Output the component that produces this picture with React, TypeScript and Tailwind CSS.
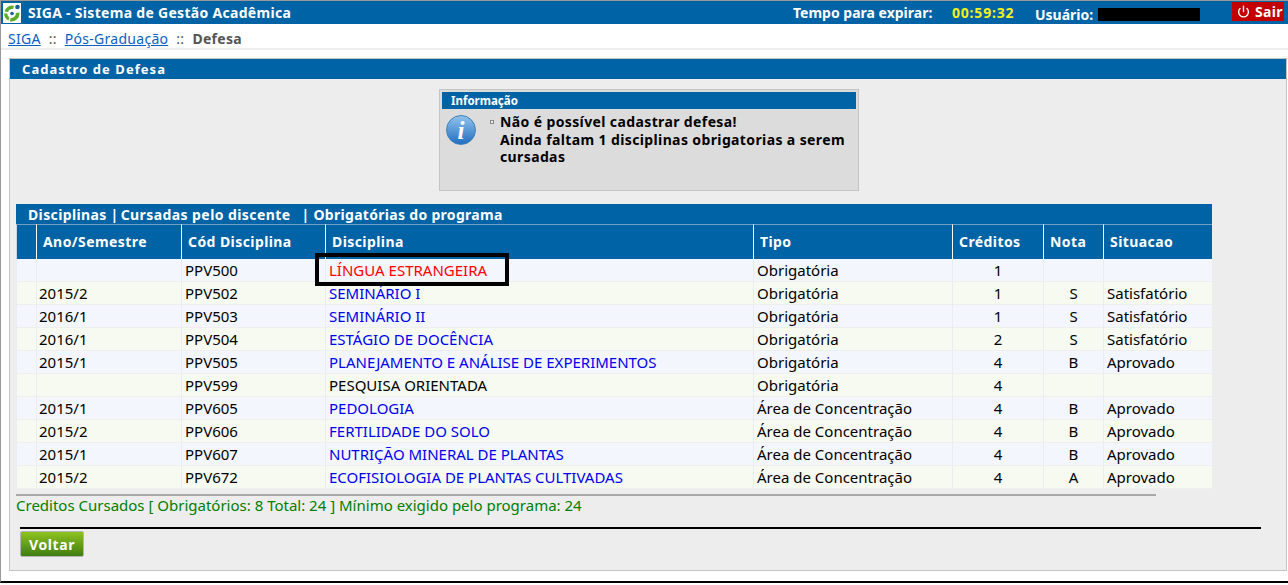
import { Power } from "lucide-react";

type Row = { ano: string; cod: string; nome: string; tipo: string; cred: string; nota: string; sit: string; cor: string; mark?: boolean };

const rows: Row[] = [
  { ano: "", cod: "PPV500", nome: "LÍNGUA ESTRANGEIRA", tipo: "Obrigatória", cred: "1", nota: "", sit: "", cor: "text-[#ff0000]", mark: true },
  { ano: "2015/2", cod: "PPV502", nome: "SEMINÁRIO I", tipo: "Obrigatória", cred: "1", nota: "S", sit: "Satisfatório", cor: "text-[#0000ee]" },
  { ano: "2016/1", cod: "PPV503", nome: "SEMINÁRIO II", tipo: "Obrigatória", cred: "1", nota: "S", sit: "Satisfatório", cor: "text-[#0000ee]" },
  { ano: "2016/1", cod: "PPV504", nome: "ESTÁGIO DE DOCÊNCIA", tipo: "Obrigatória", cred: "2", nota: "S", sit: "Satisfatório", cor: "text-[#0000ee]" },
  { ano: "2015/1", cod: "PPV505", nome: "PLANEJAMENTO E ANÁLISE DE EXPERIMENTOS", tipo: "Obrigatória", cred: "4", nota: "B", sit: "Aprovado", cor: "text-[#0000ee]" },
  { ano: "", cod: "PPV599", nome: "PESQUISA ORIENTADA", tipo: "Obrigatória", cred: "4", nota: "", sit: "", cor: "text-black" },
  { ano: "2015/1", cod: "PPV605", nome: "PEDOLOGIA", tipo: "Área de Concentração", cred: "4", nota: "B", sit: "Aprovado", cor: "text-[#0000ee]" },
  { ano: "2015/2", cod: "PPV606", nome: "FERTILIDADE DO SOLO", tipo: "Área de Concentração", cred: "4", nota: "B", sit: "Aprovado", cor: "text-[#0000ee]" },
  { ano: "2015/1", cod: "PPV607", nome: "NUTRIÇÃO MINERAL DE PLANTAS", tipo: "Área de Concentração", cred: "4", nota: "B", sit: "Aprovado", cor: "text-[#0000ee]" },
  { ano: "2015/2", cod: "PPV672", nome: "ECOFISIOLOGIA DE PLANTAS CULTIVADAS", tipo: "Área de Concentração", cred: "4", nota: "A", sit: "Aprovado", cor: "text-[#0000ee]" },
];

const headers = ["", "Ano/Semestre", "Cód Disciplina", "Disciplina", "Tipo", "Créditos", "Nota", "Situacao"];

function Logo() {
  return (
    <svg width="18" height="20" viewBox="0 0 18 20" className="shrink-0">
      <rect width="18" height="20" fill="#fff" />
      <circle cx="14.5" cy="4" r="2.3" fill="#1d5f96" />
      <circle cx="9" cy="10.5" r="1.8" fill="#1d5f96" />
      <path d="M1.5 8.5 A8 8 0 0 1 11 2.8 L10 6 A4.6 4.6 0 0 0 5 9 Z" fill="#5bab2d" />
      <path d="M1 10.5 L4.3 10.5 A5 5 0 0 0 6.5 14.5 L5.5 17.5 A8.5 8.5 0 0 1 1 10.5 Z" fill="#5bab2d" />
      <path d="M7.5 15 A5 5 0 0 0 13 10 L16.5 9.5 A8.3 8.3 0 0 1 7 18.5 Z" fill="#5bab2d" />
    </svg>
  );
}

function InfoIcon() {
  return (
    <div className="w-[30px] h-[30px] rounded-full bg-gradient-to-b from-[#8fc3ec] to-[#1f6fc0] border border-[#3f7fb8] flex items-center justify-center shrink-0">
      <span className="text-white text-[25px] font-bold italic leading-none font-['Liberation_Serif',serif]">i</span>
    </div>
  );
}

export default function App() {
  return (
    <div className="w-[1288px] h-[585px] bg-white overflow-hidden font-['Noto_Sans',sans-serif]">
      <div className="h-[583px] border-b-2 border-b-black border-l border-l-[#999] border-t border-t-[#999] flex flex-col">
        <header className="h-[23px] bg-[#0063a6] flex items-center text-white font-bold text-[14px] pl-[2px] shrink-0">
          <Logo />
          <span className="ml-[7px] tracking-[0.3px] w-[765px]">SIGA - Sistema de Gestão Acadêmica</span>
          <span className="w-[159px]">Tempo para expirar:</span>
          <span className="text-[#f4f01c] tracking-[0.8px] w-[83px]">00:59:32</span>
          <span className="w-[63px] mt-[3px]">Usuário:</span>
          <span className="w-[102px] h-[13px] bg-black mt-[3px]" />
          <span className="ml-[32px] w-[52px] h-[19px] mb-[3px] bg-[#c30000] flex items-center pl-[5px] gap-[5px]">
            <Power size={13} strokeWidth={2.5} />
            <span className="tracking-[0.3px]">Sair</span>
          </span>
        </header>

        <nav className="h-[26px] border-b-2 border-b-[#eeeeee] flex items-center pl-[7px] pt-[4px] text-[14px] tracking-[0.28px] text-[#555] shrink-0">
          <span className="text-[#0b5fc4] underline">SIGA</span>
          <span className="mx-[8px]">::</span>
          <span className="text-[#0b5fc4] underline">Pós-Graduação</span>
          <span className="mx-[8px]">::</span>
          <span className="font-bold">Defesa</span>
        </nav>

        <main className="ml-[8px] mr-[1px] mt-[8px] h-[513px] bg-[#ededed] border border-[#c4c4c4] flex flex-col relative">
          <div className="h-[20px] bg-[#0063a6] text-white font-bold text-[13px] pl-[12px] pt-[2px] flex items-center tracking-[1.05px] shrink-0">Cadastro de Defesa</div>

          <section className="mt-[10px] w-[420px] h-[102px] bg-[#dcdcdc] border border-[#c4c4c4] p-[2px] shrink-0 ml-[429px]">
            <div className="h-[17px] bg-[#0063a6] text-white font-bold text-[11.5px] pl-[9px] flex items-center">Informação</div>
            <div className="flex pl-[4px] pt-[6px]">
              <InfoIcon />
              <div className="w-[4px] h-[4px] border border-[#888] bg-[#eee] ml-[14px] mt-[5px] shrink-0" />
              <p className="ml-[6px] -mt-[2px] w-[352px] font-bold text-[14px] tracking-[0.38px] leading-[17.5px] text-black">
                Não é possível cadastrar defesa!
                <br />
                Ainda faltam 1 disciplinas obrigatorias a serem cursadas
              </p>
            </div>
          </section>

          <div className="ml-[6px] w-[1196px] mt-[13px] shrink-0">
            <div className="h-[20px] bg-[#0063a6] text-white font-bold text-[14px] pl-[12px] flex items-center whitespace-pre tracking-[0.36px]">
              <span>Disciplinas | </span>
              <span className="-ml-[2px] tracking-[0.42px]">Cursadas pelo discente</span>
              <span className="ml-[11px] tracking-[0.3px]">| Obrigatórias do programa</span>
            </div>
            <table className="w-full table-fixed border-separate border-spacing-0 text-[15px] leading-[20px] text-black">
              <colgroup>
                <col className="w-[20px]" />
                <col className="w-[145px]" />
                <col className="w-[144px]" />
                <col className="w-[428px]" />
                <col className="w-[199px]" />
                <col className="w-[91px]" />
                <col className="w-[60px]" />
                <col />
              </colgroup>
              <thead>
                <tr className="text-white">
                  {headers.map((h, i) => (
                    <th key={i} className="h-[35px] bg-[#0063a6] font-bold text-[14px] text-left pl-[6px] border-t border-t-[#6f9fc4] border-l border-l-white first:border-l-[#c9d6ea] tracking-[0.42px]">{h}</th>
                  ))}
                </tr>
              </thead>
              <tbody>
                {rows.map((r, i) => {
                  const bg = i % 2 === 0 ? "bg-[#f3f6fc]" : "bg-[#f6faf0]";
                  const cell = `h-[23px] p-0 border-b border-b-[#efefef] border-l border-l-[#e9edf2] ${bg}`;
                  return (
                    <tr key={r.cod}>
                      <td className={`${cell} border-l-[#c9d6ea]`} />
                      <td className={`${cell} pl-[2px]`}>{r.ano}</td>
                      <td className={`${cell} pl-[3px]`}>{r.cod}</td>
                      <td className={`${cell} pl-[3px] relative ${r.cor}`}>
                        {r.nome}
                        {r.mark && <div className="absolute z-10 left-[-11px] top-[-6px] w-[194px] h-[33px] border-[4px] border-black" />}
                      </td>
                      <td className={`${cell} pl-[3px]`}>{r.tipo}</td>
                      <td className={`${cell} text-center`}>{r.cred}</td>
                      <td className={`${cell} text-center`}>{r.nota}</td>
                      <td className={`${cell} pl-[3px]`}>{r.sit}</td>
                    </tr>
                  );
                })}
              </tbody>
            </table>
          </div>

          <div className="ml-[6px] w-[1140px] h-[2px] bg-[#a8a8a8] mt-[5px] shrink-0" />
          <p className="ml-[6px] -mt-px text-[15px] leading-[20px] text-[#008000]">Creditos Cursados [ Obrigatórios: 8 Total: 24 ] Mínimo exigido pelo programa: 24</p>
          <div className="ml-[10px] w-[1241px] h-[2px] bg-black mt-[12px] shrink-0" />
          <button className="ml-[10px] mt-[2px] w-[64px] h-[26px] rounded-[2px] bg-gradient-to-b from-[#8fc31f] to-[#3f7d12] border border-[#b5b5b5] text-white font-bold text-[14px] tracking-[0.6px]">Voltar</button>
        </main>
      </div>
    </div>
  );
}
